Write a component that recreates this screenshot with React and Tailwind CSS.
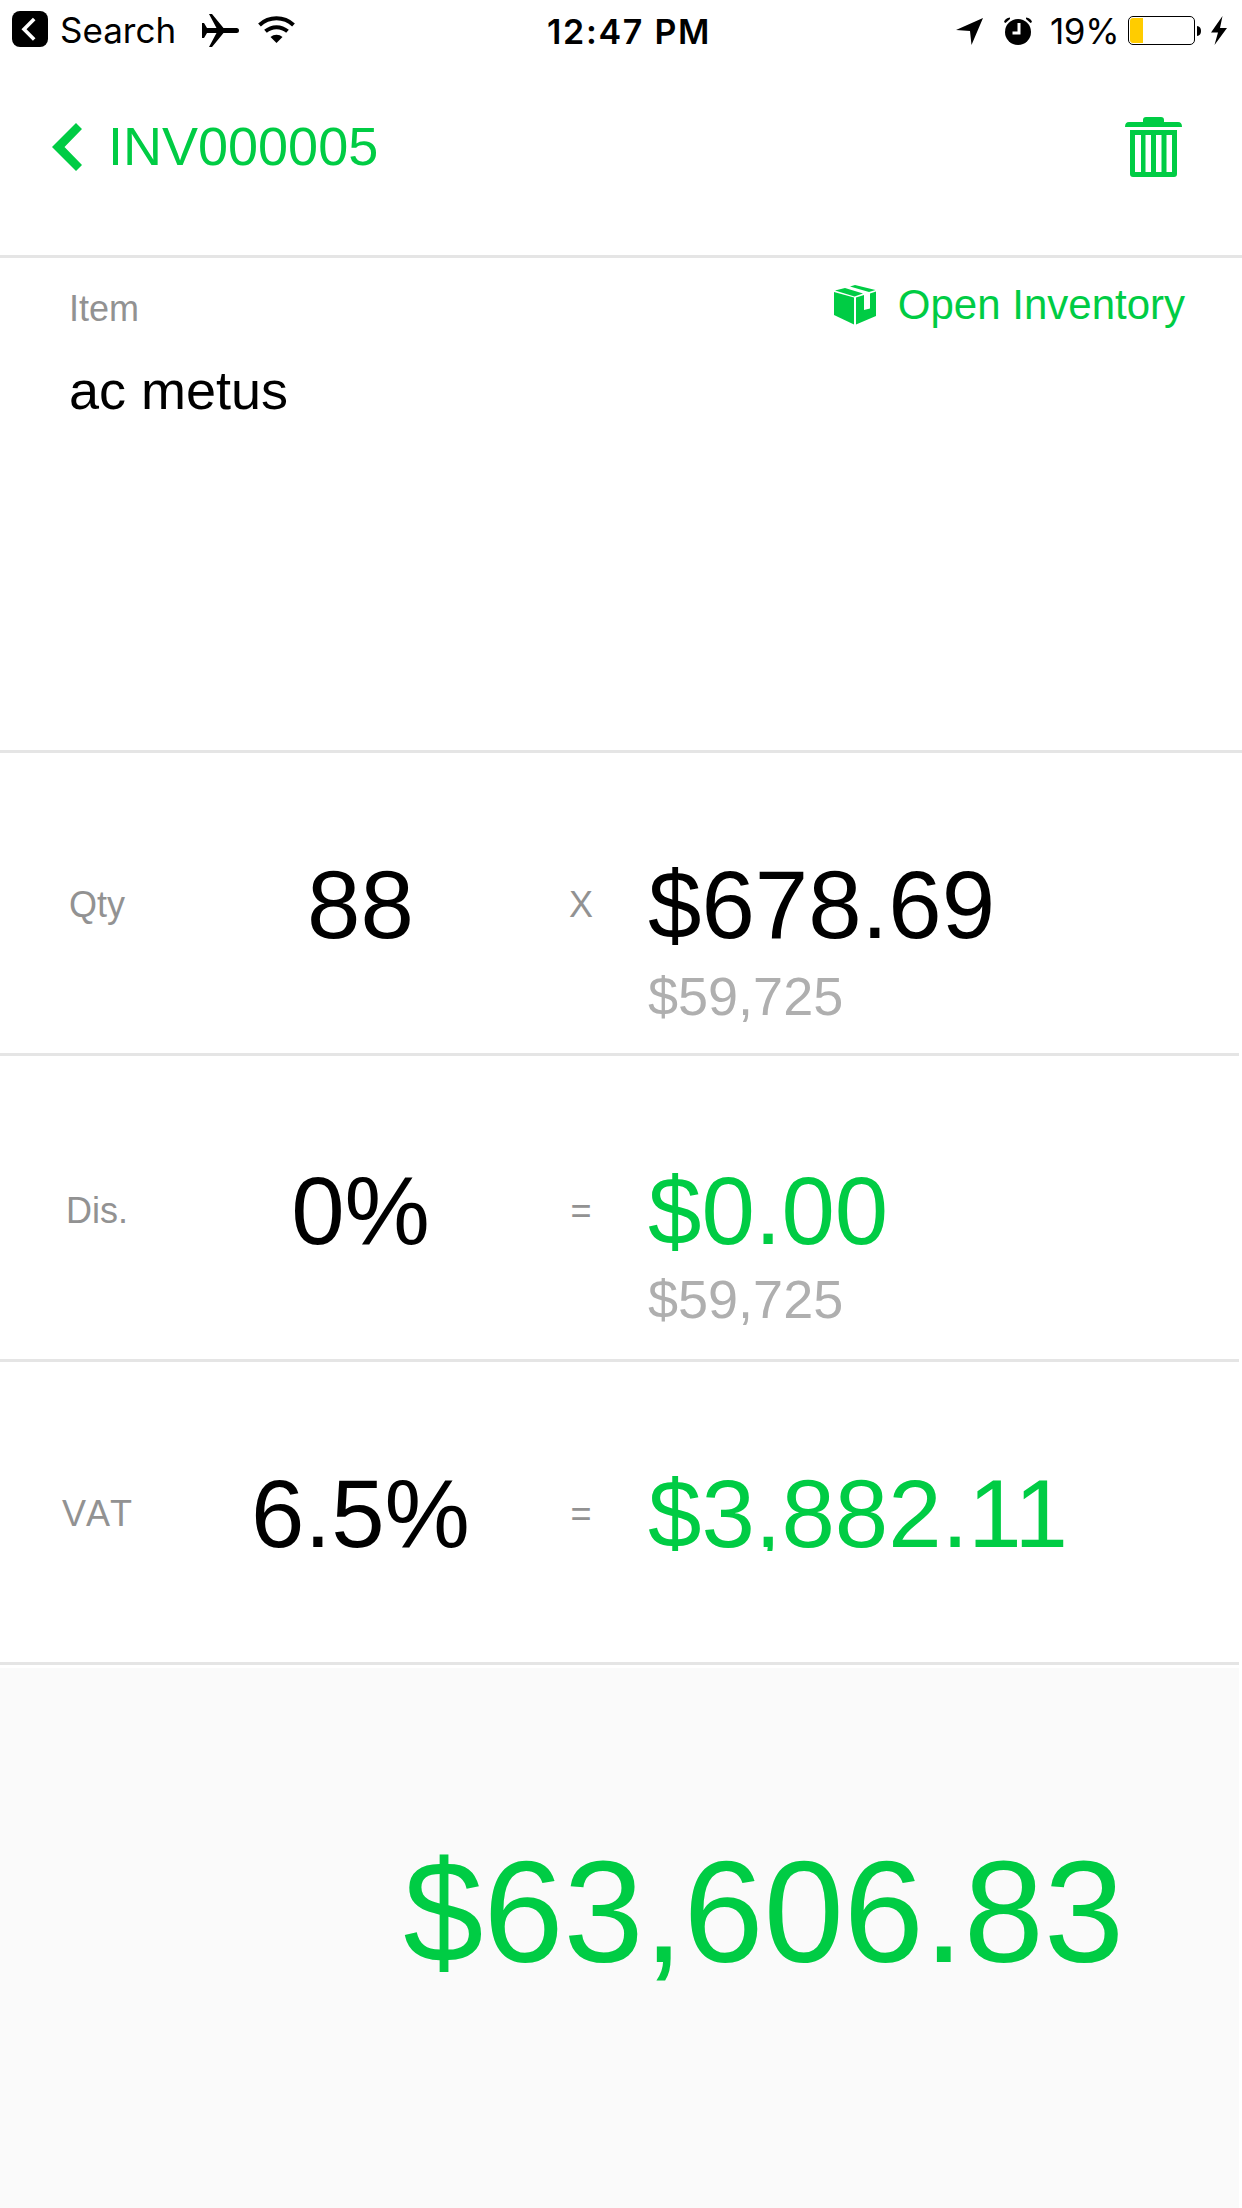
function StatusBar() {
  return (
    <div className="flex h-[60px] items-center font-['Inter',sans-serif] text-black">
      <div className="flex w-1/3 items-center pl-3">
        <svg className="-mt-0.5 block h-9 w-9 shrink-0" viewBox="0 0 36 36">
          <rect width="36" height="36" rx="8" />
          <path d="M22.2 8 L12 18.3 L22.2 28.6" fill="none" stroke="#fff" strokeWidth="3.6" />
        </svg>
        <span className="ml-3 w-[116px] whitespace-nowrap text-[35px] leading-[60px]">Search</span>
        <svg className="ml-[26px] block h-[33px] w-[37px] shrink-0" viewBox="0 0 37 33">
          <path d="M0 9H2L5 14H14.5L7 0H10L21.5 14H34.500Q37 14 37 16.5T34.500 19H21.5L10 33H7L14.5 19H5L2 24H0Z" />
        </svg>
        <svg className="ml-[19px] block h-7 w-[38px] shrink-0" viewBox="0 0 38 28">
          <path d="M1.5 9A25 25 0 0 1 35.500 9M7.500 15.300A16.600 16.600 0 0 1 29.500 15.300" fill="none" stroke="#000" strokeWidth="4" />
          <path d="M18.500 27L12.500 21A9 9 0 0 1 24.500 21Z" />
        </svg>
      </div>
      <div className="w-1/3 whitespace-nowrap pl-[133px] pt-[3px] text-[34px] font-semibold leading-[60px] tracking-[1.7px]">12:47 PM</div>
      <div className="flex w-1/3 items-center justify-end pr-[15px]">
        <svg className="mt-0.5 block h-[27px] w-[27px]" viewBox="0 0 27 27">
          <path d="M27 0L15.500 27L14 13L0 12Z" />
        </svg>
        <svg className="ml-[21px] mt-0.5 block h-7 w-7" viewBox="0 0 28 28">
          <circle cx="14" cy="15" r="13" />
          <path d="M0 5Q1 1 6 .5L6 2L1.500 6ZM28 5Q27 1 22 .5L22 2L26.500 6Z" />
          <path d="M15 6V16H8.500" fill="none" stroke="#fff" strokeWidth="3" />
        </svg>
        <span className="ml-[18px] w-[68px] whitespace-nowrap pt-0.5 text-[35px] leading-[60px] tracking-[-0.4px]">19%</span>
        <svg className="ml-2.5 mt-0.5 block h-[30px] w-[74px]" viewBox="0 0 74 30">
          <rect x=".5" y=".5" width="66" height="28" rx="4.5" fill="#fff" stroke="#000" />
          <path d="M15 2H5Q2 2 2 5V24Q2 27 5 27H15Z" fill="#ffcc00" />
          <path d="M69 10Q73 10.500 73 15T69 20Z" />
        </svg>
        <svg className="ml-[9px] block h-[29px] w-[16px]" viewBox="0 0 16 29">
          <path d="M11.500 0L0 16.500H7L3.500 29L16 12H9Z" />
        </svg>
      </div>
    </div>
  );
}

function Header() {
  return (
    <header className="flex h-[198px] items-start justify-between border-b-[3px] border-[#e5e5e5] pl-[52px] pr-[60px] text-[#00cc44]">
      <div className="flex items-start pt-[55px]">
        <svg className="mt-2 block h-12 w-[30px]" viewBox="0 0 30 48">
          <path d="M24 0L0 24L24 48L30 42L12.500 24L30 6Z" fill="currentColor" />
        </svg>
        <h1 className="ml-[26px] text-[54px] leading-[62px]">INV000005</h1>
      </div>
      <svg className="mt-[57px] block h-[60px] w-[57px]" viewBox="0 0 57 60" fill="currentColor">
        <path d="M0 10Q0 5 4 5H18V3Q18 0 21 0H36Q39 0 39 3V5H53Q57 5 57 10Z" />
        <path fillRule="evenodd" d="M5 13H52V57Q52 60 49 60H8Q5 60 5 57ZM10 18V55H16V18ZM20.500 18V55H26V18ZM31 18V55H36.500V18ZM41.500 18V55H47V18Z" />
      </svg>
    </header>
  );
}

function ItemSection() {
  return (
    <section className="flex h-[495px] items-start justify-between border-b-[3px] border-[#e5e5e5] pl-[69px] pr-[57px]">
      <div>
        <div className="mt-[30px] text-[36px] leading-[42px] text-[#929292]">Item</div>
        <div className="mt-[29px] text-[54px] leading-[62px] text-black">ac metus</div>
      </div>
      <div className="mt-[23px] flex items-center text-[#00cc44]">
        <svg className="block h-10 w-[42px]" viewBox="0 0 42 40" fill="currentColor">
          <path d="M0 7L20 12.500V39.500L0 30Z" />
          <path d="M22 12.500L30 10V25L36 23.500V8.500L42 6.500V31L22 39.500Z" />
          <path d="M1 5.500L11 3L29 8.500L20.500 11.500Z" />
          <path d="M16 1.500L21 0L41.500 5L35 7Z" />
        </svg>
        <span className="ml-[22px] text-[42px] leading-[48px]">Open Inventory</span>
      </div>
    </section>
  );
}

function Row({ label, value, sign, amount, rowClass, labelClass, valueClass, amountClass, sub, subClass }) {
  return (
    <section className={"mr-[3px] flex border-b-[3px] border-[#e5e5e5] " + rowClass}>
      <div className={"w-[194px] text-center text-[36px] leading-[42px] text-[#929292] [font-kerning:none] " + labelClass}>{label}</div>
      <div className={"w-[332px] pl-px text-center text-[96px] leading-[110px] text-black " + valueClass}>{value}</div>
      <div className={"w-[110px] text-center text-[36px] leading-[42px] text-[#929292] " + labelClass}>{sign}</div>
      <div className={"pl-3 " + valueClass}>
        <div className={"text-[96px] leading-[110px] " + amountClass}>{amount}</div>
        {sub && <div className={"text-[54px] leading-[62px] text-[#afafaf] " + subClass}>{sub}</div>}
      </div>
    </section>
  );
}

export default function App() {
  return (
    <main className="flex h-[2208px] w-[1242px] flex-col overflow-hidden bg-white font-['Liberation_Sans',Arial,sans-serif]">
      <StatusBar />
      <Header />
      <ItemSection />
      <Row
        label="Qty" value="88" sign="X" amount="$678.69" sub="$59,725"
        rowClass="h-[303px]" labelClass="pt-[131px]" valueClass="pt-[97px]"
        amountClass="text-black" subClass="mt-[5px]"
      />
      <Row
        label="Dis." value="0%" sign="=" amount="$0.00" sub="$59,725"
        rowClass="h-[306px]" labelClass="pt-[134px]" valueClass="pt-[100px]"
        amountClass="text-[#00cc44]" subClass="mt-[2px]"
      />
      <Row
        label="VAT" value="6.5%" sign="=" amount="$3,882.11"
        rowClass="h-[303px]" labelClass="pt-[131px]" valueClass="pt-[97px]"
        amountClass="h-[92px] overflow-hidden text-[#00cc44]"
      />
      <footer className="mr-[3px] mt-[3px] flex flex-1 justify-end bg-[#fafafa] pr-[115px] pt-[162px] text-[144px] leading-[166px] text-[#00cc44]">
        $63,606.83
      </footer>
    </main>
  );
}
